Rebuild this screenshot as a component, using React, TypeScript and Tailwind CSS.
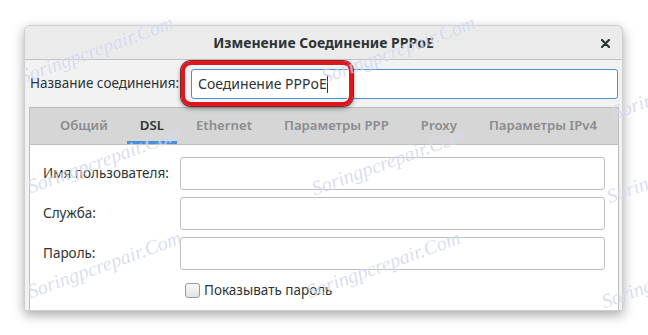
import React from "react";

const marks: { x: number; y: number }[] = [
  { x: 20, y: 62 },
  { x: 322, y: 62 },
  { x: 612, y: 98 },
  { x: 28, y: 172 },
  { x: 312, y: 174 },
  { x: 607, y: 182 },
  { x: 28, y: 277 },
  { x: 307, y: 277 },
  { x: 602, y: 287 },
];

function Tab({ label, active }: { label: string; active?: boolean }) {
  return (
    <div
      className={
        "flex h-full items-center px-[13px] text-[13.2px] font-semibold whitespace-nowrap border-b-[3px] pt-[2px] " +
        (active ? "text-[#2e3436] border-[#4a90d9]" : "text-[#8a8c8e] border-transparent")
      }
    >
      {label}
    </div>
  );
}

function Field({ label }: { label: string }) {
  return (
    <div className="flex items-center h-[33px]">
      <div className="w-[137px] text-[13.5px] text-[#2e3436] whitespace-nowrap">{label}</div>
      <div className="flex-1 h-[33px] bg-white border border-[#bfbfbf] rounded-[3px]" />
    </div>
  );
}

export default function App() {
  return (
    <div
      className="relative w-[648px] h-[335px] bg-white overflow-hidden"
      style={{ fontFamily: '"Noto Sans", "Open Sans", sans-serif' }}
    >
      <div className="ml-[24px] mt-[25px] w-[599px] h-[286px] flex flex-col rounded-t-[6px] bg-[#f2f2f2] shadow-[0_4px_12px_rgba(0,0,0,0.35)] border border-[#cfcfcf]">
        {/* title bar */}
        <div className="relative h-[34px] flex items-center justify-center bg-[#ebebeb] rounded-t-[6px] border-b border-[#c2c2c2]">
          <span className="text-[14px] font-bold text-[#2e3436]">Изменение Соединение PPPoE</span>
          <svg className="absolute right-[12px] top-[13px]" width="9" height="9" viewBox="0 0 9 9">
            <path d="M1 1 L8 8 M8 1 L1 8" stroke="#2e3436" strokeWidth="2.2" strokeLinecap="round" />
          </svg>
        </div>
        {/* name row */}
        <div className="h-[47px] flex items-center pl-[5px] pr-[4px]">
          <span className="text-[13.5px] text-[#2e3436] w-[161px] whitespace-nowrap">Название соединения:</span>
          <div className="flex-1 h-[30px] bg-white border border-[#4a90d9] rounded-[3px] flex items-center pl-[6px]">
            <span className="text-[14px] text-[#2e3436]">Соединение PPPoE</span>
            <span className="w-[1px] h-[18px] bg-[#2e3436]" />
          </div>
        </div>
        {/* notebook */}
        <div className="flex-1 ml-[4px] mr-[3px] border border-b-0 border-[#bdbdbd] bg-white flex flex-col">
          <div className="h-[37px] bg-[#d6d6d6] border-b border-[#bdbdbd] flex items-stretch pl-[17px] gap-[6px]">
            <Tab label="Общий" />
            <Tab label="DSL" active />
            <Tab label="Ethernet" />
            <Tab label="Параметры PPP" />
            <Tab label="Proxy" />
            <Tab label="Параметры IPv4" />
          </div>
          <div className="flex flex-col gap-[7px] pt-[12px] pl-[13px] pr-[13px]">
            <Field label="Имя пользователя:" />
            <Field label="Служба:" />
            <Field label="Пароль:" />
            <div className="flex items-center pl-[142px] mt-[3px]">
              <div className="w-[15px] h-[15px] rounded-[3px] border border-[#9a9a9a] bg-gradient-to-b from-[#fafafa] to-[#e2e2e2]" />
              <span className="ml-[4px] text-[13.5px] text-[#2e3436]">Показывать пароль</span>
            </div>
          </div>
        </div>
      </div>

      {/* red highlight annotation */}
      <div className="absolute left-[181px] top-[61px] w-[172px] h-[45px] rounded-[10px] border-[4px] border-[#e3141b] shadow-[0_0_0_1px_#7a2a2a,0_2px_5px_rgba(0,0,0,0.5),inset_0_0_0_1px_#ffffff]" />

      {/* watermarks */}
      {marks.map((m, i) => (
        <div
          key={i}
          className="absolute pointer-events-none italic text-[20px] text-[rgba(150,165,215,0.38)] whitespace-nowrap origin-left"
          style={{
            left: m.x,
            top: m.y,
            transform: "rotate(-20deg)",
            fontFamily: '"Liberation Serif", serif',
            textShadow: "0 0 1px rgba(255,255,255,0.8)",
          }}
        >
          Soringpcrepair.Com
        </div>
      ))}
    </div>
  );
}
